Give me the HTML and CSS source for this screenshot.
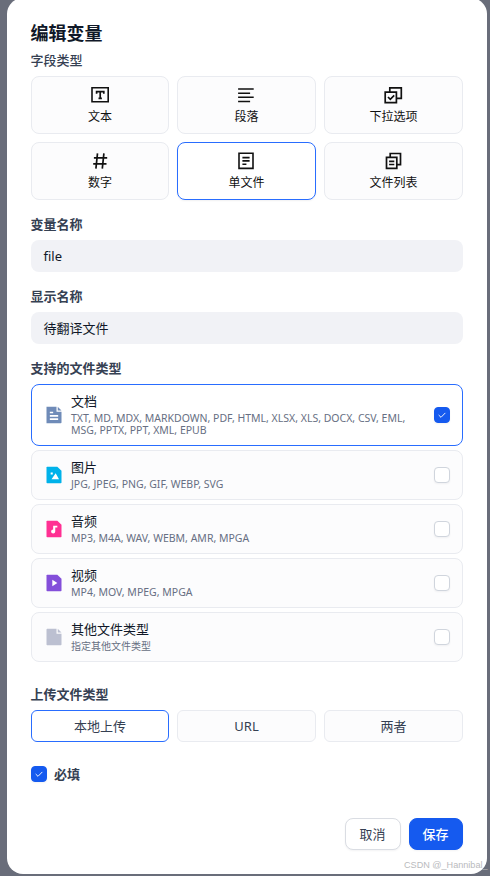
FILE: index.html
```html
<!DOCTYPE html>
<html lang="zh-CN">
<head>
<meta charset="utf-8">
<title>编辑变量</title>
<link rel="stylesheet" href="styles.css">
</head>
<body>
<main class="modal">
  <h1 class="title">编辑变量</h1>
  <section class="field field-first">
    <h2 class="label label-first">字段类型</h2>
    <div class="types">
      <div class="type">
        <svg class="icon" viewBox="0 0 20 20"><path d="M2 2.800h16.200v14H2z" fill="none" stroke="#111" stroke-width="1.6"/><path d="M6.600 8.800V6.700h7.200v2.100M10.200 6.700v6.700M8.500 13.400h3.400" fill="none" stroke="#111" stroke-width="1.7"/></svg>
        <span>文本</span>
      </div>
      <div class="type">
        <svg class="icon" viewBox="0 0 20 20"><path d="M1.100 4h15.600M1.100 8.200h12M1.100 12.300h15.600M1.100 16.500h12" fill="none" stroke="#111" stroke-width="1.6"/></svg>
        <span>段落</span>
      </div>
      <div class="type">
        <svg class="icon" viewBox="0 0 20 20"><path d="M1.200 7.100h11.200v10.600H1.200z M5.800 7V2.800h11.500v10.600h-4.700M4 12l2.300 2.300 3.900-3.900" fill="none" stroke="#111" stroke-width="1.7"/></svg>
        <span>下拉选项</span>
      </div>
      <div class="type">
        <svg class="icon" viewBox="0 0 20 20"><path d="M7.500 2.300 5.900 17.700M13.900 2.300l-1.600 15.400M3.900 6.800h13.300M3.200 12.900h13.300" fill="none" stroke="#111" stroke-width="1.7"/></svg>
        <span>数字</span>
      </div>
      <div class="type selected">
        <svg class="icon" viewBox="0 0 20 20"><path d="M2 2.200h14v15.200H2z M5.400 6.600h7.200M5.400 9.900h7.200M5.400 13.200h4" fill="none" stroke="#111" stroke-width="1.6"/></svg>
        <span>单文件</span>
      </div>
      <div class="type">
        <svg class="icon" viewBox="0 0 20 20"><path d="M2.500 6.300h10.300v11.100H2.500z M6.200 6.200V2.500h10.300v11.200h-3.600M5.100 10.300h5.200M5.100 13.500h5.200" fill="none" stroke="#111" stroke-width="1.7"/></svg>
        <span>文件列表</span>
      </div>
    </div>
  </section>
  <section class="field">
    <h2 class="label">变量名称</h2>
    <div class="input">file</div>
  </section>
  <section class="field">
    <h2 class="label">显示名称</h2>
    <div class="input">待翻译文件</div>
  </section>
  <section class="field">
    <h2 class="label">支持的文件类型</h2>
    <div class="files">
      <div class="file selected">
        <svg class="icon" viewBox="0 0 24 24"><path fill="#6f8bb8" d="M3 2h12v6h6v13a1 1 0 0 1-1 1H3zM16.500 2 21 6.500h-4.500z"/><path d="M7 9h4M7 13h10M7 17h10" stroke="#fff" stroke-width="2"/></svg>
        <div class="info"><div class="name">文档</div><div class="desc">TXT, MD, MDX, MARKDOWN, PDF, HTML, XLSX, XLS, DOCX, CSV, EML, MSG, PPTX, PPT, XML, EPUB</div></div>
        <span class="check checked"><svg class="tick" viewBox="0 0 12 12"><path d="m2 6 2.800 2.800L10 3.500" fill="none" stroke="#fff" stroke-width="1.1"/></svg></span>
      </div>
      <div class="file">
        <svg class="icon" viewBox="0 0 24 24"><path fill="#00b2ea" d="M4 2h12l5 5v14a1 1 0 0 1-1 1H4a1 1 0 0 1-1-1V3a1 1 0 0 1 1-1z"/><path d="m9 17 5-7 4 7zM8 9h2.500v2.500H8z" fill="#fff"/></svg>
        <div class="info"><div class="name">图片</div><div class="desc">JPG, JPEG, PNG, GIF, WEBP, SVG</div></div>
        <span class="check"></span>
      </div>
      <div class="file">
        <svg class="icon" viewBox="0 0 24 24"><path fill="#ff3093" d="M4 2h12l5 5v14a1 1 0 0 1-1 1H4a1 1 0 0 1-1-1V3a1 1 0 0 1 1-1z"/><path d="M11 8h5v2.200h-2.500V15a2.500 2.500 0 1 1-2.500-2.500z" fill="#fff"/></svg>
        <div class="info"><div class="name">音频</div><div class="desc">MP3, M4A, WAV, WEBM, AMR, MPGA</div></div>
        <span class="check"></span>
      </div>
      <div class="file">
        <svg class="icon" viewBox="0 0 24 24"><path fill="#844fda" d="M4 2h12l5 5v14a1 1 0 0 1-1 1H4a1 1 0 0 1-1-1V3a1 1 0 0 1 1-1z"/><path d="m10 8 6 4-6 4z" fill="#fff"/></svg>
        <div class="info"><div class="name">视频</div><div class="desc">MP4, MOV, MPEG, MPGA</div></div>
        <span class="check"></span>
      </div>
      <div class="file">
        <svg class="icon" viewBox="0 0 24 24"><path fill="#bcc0d1" d="M4 2h11v6h6v13a1 1 0 0 1-1 1H4a1 1 0 0 1-1-1V3a1 1 0 0 1 1-1zM16.500 2 21 6.500h-4.500z"/></svg>
        <div class="info"><div class="name">其他文件类型</div><div class="desc desc-cn">指定其他文件类型</div></div>
        <span class="check"></span>
      </div>
    </div>
  </section>
  <section class="field field-upload">
    <h2 class="label">上传文件类型</h2>
    <div class="options">
      <div class="option selected">本地上传</div>
      <div class="option">URL</div>
      <div class="option">两者</div>
    </div>
  </section>
  <div class="required">
    <span class="check checked"><svg class="tick" viewBox="0 0 12 12"><path d="m2 6 2.800 2.800L10 3.500" fill="none" stroke="#fff" stroke-width="1.1"/></svg></span>
    <span class="required-text">必填</span>
  </div>
  <footer class="actions">
    <button class="btn">取消</button>
    <button class="btn primary">保存</button>
  </footer>
</main>
<div class="watermark">CSDN @_Hannibal_</div>
</body>
</html>
```
FILE: styles.css
```css
* { box-sizing: border-box; }
html { height: 876px; overflow: hidden; }
body {
  margin: 0;
  height: 876px;
  padding: 0 3px 0 7px;
  overflow: hidden;
  background: #696d7a;
  font-family: "Noto Sans", "Noto Sans CJK SC", sans-serif;
  font-size: 13px;
  color: #354052;
}
.modal {
  width: 480px;
  height: 876px;
  margin-top: -2px;
  padding: 24px;
  border-radius: 16px;
  background: #fff;
}
.title {
  margin: 0 0 0 -0.5px;
  height: 28px;
  line-height: 22px;
  font-size: 18px;
  font-weight: 700;
  color: #101828;
}
.field { margin-top: 12px; }
.field-first { margin-top: -2px; }
.field-upload { margin-top: 20px; }
.label {
  margin: 0 0 0 -0.5px;
  height: 28px;
  line-height: 24px;
  font-size: 13px;
  font-weight: 600;
}
.label-first { font-weight: 500; }
.types, .options {
  display: grid;
  grid-template-columns: 138px 139px 139px;
  gap: 8px;
}
.type {
  display: flex;
  flex-direction: column;
  align-items: center;
  height: 58px;
  padding-top: 8px;
  border: 1px solid #e9ebf0;
  border-radius: 8px;
  background: #fcfcfd;
  font-size: 12px;
  line-height: 24px;
  color: #111;
}
.icon { display: block; flex: none; width: 20px; height: 20px; }
.type.selected, .file.selected, .option.selected {
  border-color: #296dff;
  background: #fff;
}
.type.selected { box-shadow: 0 1px 2px rgba(16, 24, 40, .06); }
.input {
  height: 32px;
  padding: 0 12.5px;
  border-radius: 8px;
  background: #f1f2f6;
  line-height: 32px;
  color: #101828;
}
.files { display: flex; flex-direction: column; gap: 4px; }
.file {
  display: flex;
  align-items: center;
  min-height: 50px;
  padding: 0 12px;
  border: 1px solid #e9ebf0;
  border-radius: 8px;
  background: #fcfcfd;
}
.file.selected { min-height: 62px; }
.info { flex: 1; margin-left: 7px; padding: 0 12px 4px 0; }
.name { height: 20px; line-height: 20px; color: #101828; }
.desc { margin-top: 1px; font-size: 10.5px; line-height: 12px; color: #676f83; }
.desc-cn { font-size: 10px; }
.check {
  display: flex;
  align-items: center;
  justify-content: center;
  flex: none;
  width: 16px;
  height: 16px;
  border: 1px solid #d0d5dd;
  border-radius: 4px;
  background: #fff;
  box-shadow: 0 1px 2px rgba(16, 24, 40, .05);
}
.check.checked { border-color: #155aef; background: #155aef; }
.tick { flex: none; width: 10px; height: 10px; }
.option {
  height: 32px;
  border: 1px solid #e9ebf0;
  border-radius: 6px;
  background: #fcfcfd;
  line-height: 30px;
  text-align: center;
}
.required {
  display: flex;
  align-items: center;
  gap: 7px;
  height: 16px;
  margin-top: 24px;
  font-weight: 600;
}
.required-text { padding-bottom: 2px; }
.actions {
  display: flex;
  justify-content: flex-end;
  gap: 8px;
  margin-top: 36px;
}
.btn {
  width: 56px;
  height: 32px;
  padding: 0 1px 2px 0;
  border: 1px solid #dadde3;
  border-radius: 8px;
  background: #fff;
  box-shadow: 0 1px 2px rgba(16, 24, 40, .05);
  font: 400 13px "Noto Sans", "Noto Sans CJK SC", sans-serif;
  color: #354052;
}
.btn.primary { width: 54px; border-color: #155aef; background: #155aef; color: #fff; font-weight: 500; }
.watermark {
  position: absolute;
  left: 404px;
  top: 859px;
  font: 9.1px/12px "Liberation Sans", sans-serif;
  color: #b9babd;
  white-space: nowrap;
}
```
